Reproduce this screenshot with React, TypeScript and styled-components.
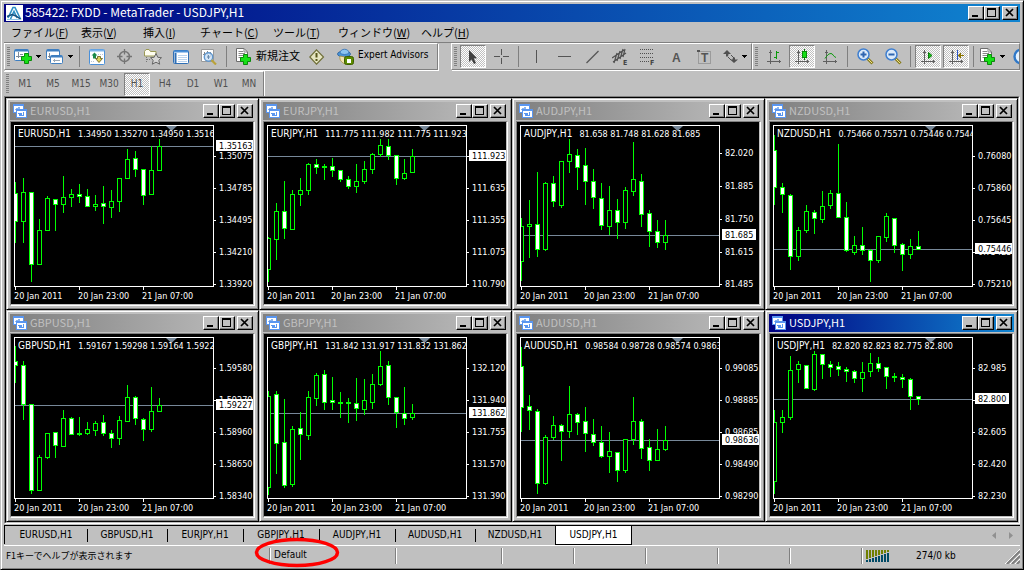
import React from "react";
import styled, { createGlobalStyle, css } from "styled-components";

const ui = '"DejaVu Sans Condensed", "DejaVu Sans", "Noto Sans CJK JP", sans-serif';
const jp = '"Noto Sans CJK JP", sans-serif';
const face = "#c0c0c0";

const GlobalStyle = createGlobalStyle`
  *, *::before, *::after { box-sizing: border-box; }
  body { margin: 0; background: ${face}; color: #000; font: 10px/12px ${ui}; }
  button { font: inherit; color: inherit; margin: 0; padding: 0; border: 0; background: none; }
  svg { display: block; flex: none; }
`;

const Frame = styled.div`
  display: flex;
  flex-direction: column;
  min-height: 100vh;
  padding: 3px;
  border: 1px solid;
  border-color: ${face} #000 #000 ${face};
  box-shadow: inset 1px 1px #fff, inset -1px -1px #808080;
  background: ${face};
  overflow: hidden;
`;

const TitleBar = styled.header<{ $active?: boolean }>`
  display: flex;
  align-items: center;
  height: 18px;
  padding: 0 2px;
  color: ${(p) => (p.$active ? "#fff" : face)};
  background: ${(p) =>
    p.$active
      ? "linear-gradient(90deg, #000080, #1084d0)"
      : "linear-gradient(90deg, #808080, #c0c0c0)"};
`;

const TitleText = styled.h1`
  flex: 1;
  min-width: 0;
  margin: 0 0 0 2px;
  padding-bottom: 2px;
  font: 400 12px/16px ${jp};
  white-space: nowrap;
  overflow: hidden;
`;

const WindowTitle = styled(TitleText)`
  margin-left: 3px;
  font-size: 11px;
`;

const CaptionButton = styled.button<{ $gap?: boolean }>`
  display: grid;
  place-items: center;
  width: 16px;
  height: 14px;
  margin-left: ${(p) => (p.$gap ? 2 : 0)}px;
  background: ${face};
  border: 1px solid;
  border-color: #fff #000 #000 #fff;
  box-shadow: inset -1px -1px #808080;
`;

const MenuBar = styled.nav`
  display: flex;
  height: 21px;
  padding-left: 7px;
  border-bottom: 1px solid #808080;
`;

const MenuItem = styled.button<{ $w: number }>`
  width: ${(p) => p.$w}px;
  font: 11px/20px ${jp};
  text-align: left;
  white-space: nowrap;
`;

const BandRow = styled.div`
  display: flex;
  height: 28px;
  overflow: hidden;
`;

const Band = styled.div<{ $gap?: boolean; $grow?: boolean }>`
  display: flex;
  flex: ${(p) => (p.$grow ? "1 0 0" : "none")};
  align-items: center;
  height: 27px;
  margin-right: ${(p) => (p.$gap ? 13 : 0)}px;
  border: 1px solid;
  border-color: #fff #808080 #808080 #fff;
  box-shadow: 1px 1px #fff;
  overflow: hidden;
`;

const PeriodBand = styled(Band)`
  align-self: flex-start;
  height: 25px;
  border-bottom: 0;
  border-left: 0;
  box-shadow: 1px 0 #fff;
`;

const Grip = styled.span`
  flex: none;
  width: 3px;
  height: 20px;
  margin: 0 2px 0 2px;
  background: repeating-linear-gradient(#808080 0 1px, ${face} 1px 2px);
`;

const ToolButton = styled.button<{ $w?: number; $on?: boolean; $left?: boolean }>`
  display: flex;
  flex: none;
  align-items: center;
  justify-content: ${(p) => (p.$left ? "flex-start" : "center")};
  gap: 4px;
  width: ${(p) => p.$w ?? 28}px;
  height: 23px;
  padding-left: ${(p) => (p.$left ? 6 : 0)}px;
  white-space: nowrap;
  ${(p) =>
    p.$on &&
    css`
      width: 26px;
      margin: 0 1px;
      border: 1px solid;
      border-color: #808080 #fff #fff #808080;
      background: conic-gradient(#fff 25%, ${face} 0 50%, #fff 0 75%, ${face} 0) 0 0 / 2px 2px;
    `}
`;

const PeriodButton = styled(ToolButton)`
  color: #505050;
`;

const Label = styled.span<{ $jp?: boolean }>`
  font: ${(p) => (p.$jp ? `11px/14px ${jp}` : `10px/14px ${ui}`)};
  padding-bottom: 3px;
`;

const Divider = styled.span`
  flex: none;
  width: 1px;
  height: 21px;
  margin: 0 3px;
  background: #808080;
`;

const Desktop = styled.main`
  border: 1px solid;
  border-color: #808080 #fff #fff #808080;
`;

const WindowGrid = styled.div`
  display: grid;
  grid-template-columns: repeat(4, minmax(0, 1fr));
  border: 1px solid;
  border-color: #000 ${face} ${face} #000;
`;

const ChartWindow = styled.section`
  border: 1px solid;
  border-color: ${face} #000 #000 ${face};
  box-shadow: inset 1px 1px #fff, inset -1px -1px #808080;
  padding: 3px;
  background: ${face};
`;

const ChartClient = styled.div`
  margin-top: 1px;
  border: 1px solid;
  border-color: #808080 #fff #fff #808080;
  background: ${face};
  padding: 0 1px 1px 0;
`;

const Canvas = styled.svg`
  width: 100%;
  height: 182px;
  background: #000;
  font: 9px ${ui};
  fill: #fff;
`;

const Plot = styled.svg`
  width: calc(100% - 42px);
`;

const Symbol = styled.tspan`
  font-size: 10px;
`;

const TabStrip = styled.nav`
  display: flex;
  height: 21px;
  margin-top: 1px;
  border-top: 1px solid #000;
  border-bottom: 1px solid #fff;
`;

const Tab = styled.button<{ $w: number; $active?: boolean }>`
  width: ${(p) => p.$w}px;
  height: ${(p) => (p.$active ? 19 : 18)}px;
  line-height: 18px;
  ${(p) =>
    p.$active
      ? css`
          background: #fff;
          border: 1px solid #000;
          border-width: 0 1px 1px;
        `
      : css`
          &:not(:first-child) {
            background: linear-gradient(#000, #000) 0 3px / 1px 13px no-repeat;
          }
          &:first-child {
            border-left: 1px solid #000;
          }
        `}
`;

const TabScroll = styled.div`
  display: flex;
  gap: 13px;
  align-items: center;
  margin-left: auto;
  padding-right: 7px;
`;

const StatusBar = styled.footer`
  display: flex;
  align-items: center;
  height: 20px;
  white-space: nowrap;
`;

const StatusCell = styled.div<{ $w?: number }>`
  position: relative;
  flex: none;
  width: ${(p) => p.$w ?? 72}px;
  height: 16px;
  padding-left: 4px;
  font: 10px/14px ${ui};
  border-left: 1px solid #808080;
  box-shadow: inset 1px 0 #fff;
`;

const StatusHint = styled.div`
  flex: none;
  width: 265px;
  padding-left: 2px;
  font: 9px/14px ${jp};
`;

const Connection = styled(StatusCell)`
  display: flex;
  flex: 1;
  gap: 27px;
  align-items: center;
`;

const Highlight = styled.svg`
  position: absolute;
  left: -17px;
  top: -12px;
  z-index: 2;
`;

const SizeGrip = styled.svg`
  margin-left: auto;
  align-self: flex-end;
`;

/* ---------- icons ---------- */

const Svg = ({ w = 16, h = 16, children, crisp }: { w?: number; h?: number; children: React.ReactNode; crisp?: boolean }) => (
  <svg width={w} height={h} viewBox={`0 0 ${w} ${h}`} fill="none" shapeRendering={crisp ? "crispEdges" : undefined} aria-hidden="true">
    {children}
  </svg>
);

const Logo = () => (
  <Svg w={17}>
    <rect width="17" height="16" fill="#fff" />
    <path d="M2 13 L7 2.500 L9 2.500 L14.500 14 M4.500 14 L8 6.500 L11 13" stroke="#2e8fc4" strokeWidth="1.600" />
    <path d="M1 11.500 L6 9.500 L10 11 L15 14.500" stroke="#174f7c" strokeWidth="1.500" />
    <path d="M1 14.500 H15" stroke="#8fc7e6" />
  </Svg>
);

const ChartIcon = () => (
  <Svg w={15} h={14} crisp>
    <path d="M1 0 H12 V9 H1 Z" fill="#5a96f0" />
    <path d="M2 2 H11 V8 H2 Z" fill="#fff" />
    <path d="M3 5 H4 V4 H5 V5 H6 V3 H7 V5 H10" stroke="#8ab4f0" />
    <path d="M4 5 H15 V14 H4 Z" fill="#5a96f0" />
    <path d="M5 7 H14 V13 H5 Z" fill="#fff" />
    <path d="M6 9.500 H7 V11.500 H8 V9.500 H9 V11.500 H11 V8.500 H12" stroke="#5a96f0" />
  </Svg>
);

const Plus = ({ x, y }: { x: number; y: number }) => (
  <path
    transform={`translate(${x} ${y})`}
    d="M3.500 .5 H7.500 V3.500 H10.500 V7.500 H7.500 V10.500 H3.500 V7.500 H.5 V3.500 H3.500 Z"
    fill="#16e016"
    stroke="#0a8a0a"
  />
);

const Caret = () => (
  <Svg w={5} h={3} crisp>
    <path d="M0 0 H5 L2.500 3 Z" fill="#000" />
  </Svg>
);

const NewChartIcon = () => (
  <Svg w={18} h={16}>
    <rect x=".5" y=".5" width="14" height="11" rx="1" fill="#fff" stroke="#3f7fc0" />
    <path d="M1 1.500 H14" stroke="#3f7fc0" strokeWidth="2" />
    <path d="M4.500 3 V9 M2 7.500 H9 M6 5.500 H9" stroke="#7d8a99" />
    <Plus x={7} y={4} />
  </Svg>
);

const ProfilesIcon = () => (
  <Svg w={18} h={16}>
    <rect x=".5" y=".5" width="13" height="10" rx="1" fill="#fff" stroke="#3f7fc0" />
    <path d="M1 1.500 H13" stroke="#3f7fc0" strokeWidth="2" />
    <path d="M3.500 4 V9 M2 7.500 H6" stroke="#7d8a99" />
    <rect x="4.500" y="6.500" width="12" height="8" rx="1" fill="#fff" stroke="#3f7fc0" />
    <path d="M5 7.500 H16" stroke="#3f7fc0" strokeWidth="2" />
    <path d="M7 11.500 H14 M8.500 10 V13" stroke="#9aa7b5" />
  </Svg>
);

const MarketWatchIcon = () => (
  <Svg>
    <rect x=".5" y=".5" width="15" height="15" rx="1" fill="#fff" stroke="#4a90d9" />
    <path d="M1 1.500 H15" stroke="#7db4ea" strokeWidth="2" />
    <path d="M9 5.500 H14 M2 12.500 H6" stroke="#b7c3d0" strokeDasharray="1 1" />
    <path d="M5.500 3.500 L8.500 6.500 H7 V9.500 H4 V6.500 H2.500 Z" fill="#1c8a4a" />
    <path d="M8.500 7.500 H11.500 V9.500 H13.500 L10 13.500 L6.500 9.500 H8.500 Z" fill="#e0d060" stroke="#5e5a10" strokeWidth=".8" />
  </Svg>
);

const NavigatorIcon = () => (
  <Svg>
    <circle cx="7.500" cy="7.500" r="5" stroke="#747474" strokeWidth="1.600" />
    <path d="M7.500 0 V5.500 M7.500 9.500 V15 M0 7.500 H5.500 M9.500 7.500 H15" stroke="#747474" strokeWidth="1.300" />
  </Svg>
);

const FavoritesIcon = () => (
  <Svg w={18}>
    <path d="M.5 2.500 L2 .5 H5 L6.500 2.500 H12 V7 H.5 Z" fill="#fffef2" stroke="#9b9a55" />
    <path d="M2.500 8 V14 M3 10.500 H6" stroke="#777" strokeDasharray="1 1" />
    <path d="M12 4.500 L13.800 8.300 L17.500 8.700 L14.800 11.300 L15.700 15.200 L12 13.200 L8.300 15.200 L9.200 11.300 L6.500 8.700 L10.200 8.300 Z" fill="#d6d6d6" stroke="#666" />
  </Svg>
);

const DataWindowIcon = () => (
  <Svg>
    <rect x=".5" y="1.500" width="15" height="13" rx="1" fill="#fff" stroke="#2f6fb5" />
    <path d="M1 2.500 H15" stroke="#4a90d9" strokeWidth="2" />
    <path d="M2.500 4 V14" stroke="#2f6fb5" strokeWidth="2" />
    <path d="M5 6.500 H14 M5 8.500 H14 M5 10.500 H14 M5 12.500 H14" stroke="#b9d3ee" />
  </Svg>
);

const TesterIcon = () => (
  <Svg w={18}>
    <path d="M1.500 .5 H13.500 V12.500 H1.500 Z" fill="#fff" stroke="#9a9a9a" />
    <path d="M4.500 3 V10 M7.500 2 V9 M10.500 3 V8 M3 5.500 H5" stroke="#888" />
    <circle cx="8.500" cy="8" r="4.200" fill="#cfe3f7" fillOpacity=".85" stroke="#6096cc" strokeWidth="1.400" />
    <path d="M11.500 11 L16 15.500" stroke="#b9a23a" strokeWidth="2.200" />
    <path d="M8.500 6 V10 M7 8 H10" stroke="#6a8caf" />
  </Svg>
);

const NewOrderIcon = () => (
  <Svg h={17}>
    <path d="M.5 .5 H8 L11.500 4 V13.500 H.5 Z" fill="#fff" stroke="#6d6d6d" />
    <path d="M2.500 3.500 H7 M2.500 5.500 H9 M2.500 7.500 H9 M2.500 9.500 H5 M8 .5 V4 H11" stroke="#888" />
    <Plus x={4} y={6} />
  </Svg>
);

const MetaEditorIcon = () => (
  <Svg>
    <path d="M7.500 .8 L14.500 8 L7.500 15.200 L.8 8 Z" fill="#e6e5c0" stroke="#6f6f3a" strokeWidth="1.200" />
    <path d="M7.500 4 V8.500" stroke="#55551a" strokeWidth="2" />
    <path d="M7.500 10 V12" stroke="#55551a" strokeWidth="2" />
  </Svg>
);

const ExpertIcon = () => (
  <Svg w={17} h={18}>
    <ellipse cx="7" cy="6" rx="6.500" ry="3" fill="#4a93d6" stroke="#27609b" strokeWidth=".8" />
    <path d="M3 5 C3 0 12 0 12 5 C10 7 5 7 3 5 Z" fill="#8cc4f0" stroke="#2f6fb5" strokeWidth=".8" />
    <path d="M3 8 C2 13 6 15 8 16 V9 Z" fill="#f0e3b4" stroke="#a58f3a" strokeWidth=".8" />
    <rect x="7.500" y="8.500" width="9" height="8" rx="2" fill="#5d8c00" stroke="#3d5e00" />
    <rect x="10" y="11" width="4" height="4" fill="#fff" />
  </Svg>
);

const CursorIcon = () => (
  <Svg w={16}>
    <path d="M4 1 V13 L6.600 10.600 L9 15 L11 14 L8.800 9.500 L12 9.200 Z" fill="#404040" />
  </Svg>
);

const CrosshairIcon = () => (
  <Svg w={15} h={15} crisp>
    <path d="M7.500 0 V6 M7.500 9 V15 M0 7.500 H6 M9 7.500 H15" stroke="#555" />
  </Svg>
);

const VLineIcon = () => (
  <Svg w={13} h={13} crisp>
    <path d="M6.500 0 V13" stroke="#555" />
  </Svg>
);

const HLineIcon = () => (
  <Svg w={13} h={13} crisp>
    <path d="M0 6.500 H13" stroke="#555" />
  </Svg>
);

const TrendIcon = () => (
  <Svg w={13} h={14}>
    <path d="M.5 13 L12.500 1" stroke="#555" strokeWidth="1.200" />
  </Svg>
);

const IconLetter = styled.text`
  font: 700 7px ${ui};
  fill: #444;
`;

const ToolLetter = styled.text`
  font: 700 12px "Liberation Sans", sans-serif;
  fill: #555;
`;

const ChannelIcon = () => (
  <Svg w={17} h={18}>
    <path d="M0 10 L12 2 M1 14 L14 5 M2 15 L5 5 M5 13 L8 3 M8 11 L11 1 M11 9 L13 1" stroke="#505050" strokeWidth="1.200" />
    <IconLetter x="11" y="17">E</IconLetter>
  </Svg>
);

const FiboIcon = () => (
  <Svg w={16} h={18}>
    <path d="M0 1.500 H14 M0 5.500 H14 M0 9.500 H14 M0 13.500 H9" stroke="#505050" strokeDasharray="1 1" />
    <IconLetter x="10" y="17">F</IconLetter>
  </Svg>
);

const LetterA = () => (
  <Svg w={10} h={14}>
    <ToolLetter x="1" y="12">A</ToolLetter>
  </Svg>
);

const LabelIcon = () => (
  <Svg w={14} h={14}>
    <rect x="1.500" y="1.500" width="12" height="12" stroke="#777" strokeDasharray="1 1" />
    <rect width="3" height="2" fill="#555" />
    <ToolLetter x="4" y="12">T</ToolLetter>
  </Svg>
);

const ArrowsIcon = () => (
  <Svg w={15} h={14}>
    <path d="M4 0 L8 4 L5.500 4 L5 6.500 L3 6.500 L3 4 L0 4 Z M11 13 L7 9.500 L9.500 9.500 L10 7.500 H12 V9.500 H15 Z" fill="#505050" />
    <path d="M5 7 L8 10 M8 5 L11 8" stroke="#505050" />
  </Svg>
);

const Axes = ({ children }: { children: React.ReactNode }) => (
  <Svg w={15} h={15} crisp>
    <path d="M3.500 1 V15 M0 12.500 H14 M2 3.500 H5 M12.500 11 V14" stroke="#606060" />
    {children}
  </Svg>
);

const ZoomIcon = ({ plus }: { plus?: boolean }) => (
  <Svg w={17} h={17}>
    <path d="M10 10 L15.500 15.500" stroke="#8a7d1e" strokeWidth="3" />
    <path d="M10.500 10.500 L15 15" stroke="#f0e48a" />
    <circle cx="6.500" cy="6.500" r="5.500" fill="#dcebfa" stroke="#3f7fd0" strokeWidth="1.500" />
    <path d={plus ? "M3.500 6.500 H9.500 M6.500 3.500 V9.500" : "M3.500 6.500 H9.500"} stroke="#2f66b0" strokeWidth="2" />
  </Svg>
);

const ClockIcon = () => (
  <Svg w={17} h={17}>
    <circle cx="8.500" cy="8.500" r="7" fill="#e6f2fd" stroke="#2f78c8" strokeWidth="2.400" />
    <path d="M8.500 4.500 V8.500 H11" stroke="#444" />
  </Svg>
);

const TrafficIcon = () => (
  <Svg w={23} h={12} crisp>
    {[0, 1, 2, 3, 4, 5, 6, 7].map((i) => (
      <React.Fragment key={i}>
        <rect x={i * 3} y="0" width="2" height={9 - i} fill="#6f7f00" />
        <rect x={i * 3} y={10 - i} width="2" height={2 + i} fill="#004a66" />
      </React.Fragment>
    ))}
  </Svg>
);

const CaptionButtons = () => (
  <>
    <CaptionButton aria-label="Minimize">
      <Svg w={12} h={10} crisp>
        <path d="M2 7 H8 V9 H2 Z" fill="#000" />
      </Svg>
    </CaptionButton>
    <CaptionButton aria-label="Maximize">
      <Svg w={12} h={10} crisp>
        <path d="M1 0 H10 V9 H1 Z M2 2 V8 H9 V2 Z" fill="#000" fillRule="evenodd" />
      </Svg>
    </CaptionButton>
    <CaptionButton $gap aria-label="Close">
      <Svg w={12} h={10}>
        <path d="M2 1 L9 8 M9 1 L2 8" stroke="#000" strokeWidth="1.700" />
      </Svg>
    </CaptionButton>
  </>
);

/* ---------- charts ---------- */

// high, body top, body bottom, low (canvas rows), 1 = bearish body
type Candle = [number, number, number, number, 0 | 1];

interface ChartData {
  symbol: string;
  quote: string;
  bid: string;
  bidY: number;
  labels: string[];
  ticks?: number[];
  candles: Candle[];
}

const charts: ChartData[] = [
  {
    symbol: "EURUSD,H1",
    quote: "1.34950 1.35270 1.34950 1.35163",
    bid: "1.35163",
    bidY: 24,
    labels: ["1.35075", "1.34785", "1.34495", "1.34210", "1.33920"],
    candles: [
      [60, 71, 99, 120, 1], [56, 70, 99, 120, 0], [70, 70, 142, 159, 1], [97, 108, 142, 142, 0], [74, 76, 108, 108, 0],
      [77, 77, 82, 108, 1], [54, 75, 82, 90, 0], [67, 72, 75, 84, 0], [62, 72, 74, 80, 1], [67, 74, 84, 84, 1],
      [73, 82, 84, 88, 0], [64, 81, 84, 101, 1], [68, 79, 85, 95, 0], [56, 56, 79, 89, 0], [27, 37, 56, 56, 0],
      [29, 36, 47, 54, 1], [47, 47, 73, 82, 1], [24, 48, 72, 72, 0], [17, 24, 48, 48, 0],
    ],
  },
  {
    symbol: "EURJPY,H1",
    quote: "111.775 111.982 111.775 111.923",
    bid: "111.923",
    bidY: 34,
    labels: ["", "111.635", "111.355", "111.075", "110.790"],
    candles: [
      [115, 116, 147, 159, 0], [81, 89, 117, 137, 0], [59, 89, 106, 116, 1], [68, 72, 107, 107, 0], [56, 68, 72, 83, 0],
      [41, 42, 68, 72, 0], [37, 42, 45, 51, 1], [42, 44, 45, 57, 1], [36, 44, 48, 54, 1], [48, 48, 57, 59, 1],
      [54, 57, 64, 66, 1], [42, 59, 64, 70, 0], [39, 47, 59, 61, 0], [31, 32, 47, 51, 0], [17, 23, 32, 34, 0],
      [17, 24, 33, 37, 1], [33, 33, 56, 62, 1], [37, 51, 56, 57, 0], [27, 34, 50, 50, 0],
    ],
  },
  {
    symbol: "AUDJPY,H1",
    quote: "81.658 81.748 81.628 81.685",
    bid: "81.685",
    bidY: 113,
    labels: ["82.020", "81.885", "81.750", "81.615", "81.485"],
    ticks: [31, 64, 97, 130, 162],
    candles: [
      [96, 104, 139, 158, 0], [78, 102, 104, 135, 0], [50, 102, 127, 134, 1], [60, 61, 127, 128, 0], [54, 61, 79, 84, 1],
      [39, 39, 83, 85, 0], [17, 32, 39, 50, 0], [27, 33, 45, 67, 1], [26, 43, 59, 82, 1], [47, 59, 75, 86, 1],
      [61, 76, 103, 107, 1], [64, 88, 104, 112, 0], [77, 88, 100, 116, 1], [65, 68, 100, 106, 0], [20, 57, 69, 73, 0],
      [52, 59, 92, 104, 1], [88, 91, 109, 124, 1], [98, 109, 120, 125, 1], [98, 113, 120, 127, 0],
    ],
  },
  {
    symbol: "NZDUSD,H1",
    quote: "0.75466 0.75571 0.75446 0.75446",
    bid: "0.75446",
    bidY: 127,
    labels: ["0.76080", "0.75860", "0.75645", "0.75425", "0.75210"],
    candles: [
      [13, 28, 65, 82, 1], [61, 65, 72, 90, 1], [72, 73, 134, 147, 1], [105, 108, 134, 138, 0], [83, 89, 108, 110, 0],
      [88, 90, 96, 111, 1], [69, 84, 97, 100, 0], [68, 71, 83, 86, 0], [22, 71, 95, 95, 1], [80, 95, 128, 129, 1],
      [114, 123, 130, 132, 0], [105, 123, 128, 132, 1], [127, 128, 138, 159, 1], [114, 114, 138, 140, 0], [91, 94, 115, 119, 0],
      [96, 96, 123, 130, 1], [121, 122, 132, 148, 1], [117, 124, 132, 136, 0], [109, 124, 127, 127, 1],
    ],
  },
  {
    symbol: "GBPUSD,H1",
    quote: "1.59167 1.59298 1.59164 1.59227",
    bid: "1.59227",
    bidY: 71,
    labels: ["1.59580", "1.59270", "1.58960", "1.58650", "1.58340"],
    candles: [
      [12, 27, 31, 48, 1], [27, 31, 70, 85, 1], [70, 70, 156, 159, 1], [121, 123, 156, 156, 0], [99, 99, 123, 124, 0],
      [98, 98, 111, 123, 1], [76, 84, 112, 112, 0], [83, 84, 100, 100, 1], [83, 99, 100, 101, 1], [88, 95, 99, 100, 0],
      [87, 89, 96, 101, 0], [81, 88, 99, 101, 1], [96, 99, 104, 113, 1], [82, 86, 104, 110, 0], [51, 63, 87, 87, 0],
      [62, 63, 84, 90, 1], [84, 85, 95, 106, 1], [53, 77, 95, 97, 0], [64, 71, 77, 77, 0],
    ],
  },
  {
    symbol: "GBPJPY,H1",
    quote: "131.842 131.917 131.832 131.862",
    bid: "131.862",
    bidY: 79,
    labels: ["132.120", "131.940", "131.755", "131.570", "131.390"],
    candles: [
      [57, 62, 153, 160, 0], [57, 60, 109, 139, 1], [65, 108, 151, 153, 1], [92, 95, 150, 152, 0], [78, 94, 100, 125, 1],
      [57, 63, 101, 105, 0], [39, 41, 64, 71, 0], [36, 40, 68, 75, 1], [43, 66, 68, 75, 1], [58, 68, 69, 83, 1],
      [64, 68, 69, 88, 1], [44, 69, 74, 86, 1], [45, 66, 75, 80, 0], [40, 50, 68, 74, 0], [17, 32, 50, 51, 0],
      [27, 31, 63, 70, 1], [63, 63, 78, 93, 1], [53, 79, 84, 90, 1], [70, 79, 83, 85, 0],
    ],
  },
  {
    symbol: "AUDUSD,H1",
    quote: "0.98584 0.98728 0.98574 0.98636",
    bid: "0.98636",
    bidY: 106,
    labels: ["0.99085", "0.98885", "0.98685", "0.98490", "0.98290"],
    candles: [
      [13, 32, 73, 97, 1], [61, 72, 76, 95, 1], [75, 77, 149, 159, 1], [101, 103, 149, 150, 0], [82, 91, 103, 105, 0],
      [90, 91, 97, 126, 1], [52, 80, 97, 103, 0], [79, 80, 88, 100, 1], [73, 87, 99, 117, 1], [85, 100, 108, 111, 1],
      [92, 108, 122, 123, 1], [98, 117, 122, 138, 0], [118, 118, 136, 147, 1], [105, 105, 136, 138, 0], [63, 87, 105, 110, 0],
      [85, 87, 114, 124, 1], [105, 113, 126, 136, 1], [95, 115, 126, 126, 0], [92, 106, 115, 116, 0],
    ],
  },
  {
    symbol: "USDJPY,H1",
    quote: "82.820 82.823 82.775 82.800",
    bid: "82.800",
    bidY: 65,
    labels: ["82.985", "", "82.605", "82.420", "82.230"],
    candles: [
      [76, 88, 147, 159, 0], [76, 83, 88, 98, 0], [22, 36, 83, 85, 0], [27, 30, 35, 48, 0], [31, 31, 54, 54, 1],
      [17, 20, 55, 56, 0], [20, 20, 30, 44, 1], [27, 30, 33, 42, 1], [28, 32, 35, 41, 1], [33, 35, 37, 47, 1],
      [36, 37, 44, 48, 1], [28, 38, 44, 57, 0], [19, 29, 37, 42, 0], [23, 29, 34, 37, 1], [33, 33, 42, 54, 1],
      [39, 42, 43, 47, 1], [40, 43, 45, 53, 1], [44, 45, 62, 75, 1], [62, 62, 65, 70, 1],
    ],
  },
];

const defaultTicks = [34, 66, 98, 130, 162];
const times = ["20 Jan 2011", "20 Jan 23:00", "21 Jan 07:00"];

const CandleBar = ({ x, data: [high, top, bottom, low, bear] }: { x: number; data: Candle }) => (
  <g shapeRendering="crispEdges">
    <rect x={x} y={high} width="1" height={low - high + 1} fill="#0f0" />
    <rect x={x - 2} y={top} width="5" height={bottom - top + 1} fill="#0f0" />
    {bottom - top > 1 && (
      <rect x={x - 1} y={top + 1} width="3" height={bottom - top - 1} fill={bear ? "#fff" : "#000"} />
    )}
  </g>
);

const Chart = ({ data }: { data: ChartData }) => (
  <Canvas role="img" aria-label={data.symbol}>
    <Plot x="3" y="3" height="162">
      <g transform="translate(-3 -3)">
        <rect x="3" y={data.bidY} width="100%" height="1" fill="#778899" />
        {data.candles.map((c, i) => (
          <CandleBar key={i} x={4 + i * 8} data={c} />
        ))}
        <path d="M155 4 H166 L160.500 9 Z" fill="#778899" />
        <text x="7" y="15">
          <Symbol>{data.symbol}</Symbol>
          <tspan dx="7">{data.quote}</tspan>
        </text>
      </g>
      <rect width="100%" height="100%" fill="none" stroke="#fff" strokeWidth="2" shapeRendering="crispEdges" />
    </Plot>
    {times.map((t, i) => (
      <React.Fragment key={t}>
        <rect x={4 + i * 64} y="165" width="1" height="3" />
        <text x={3 + i * 64} y="177">{t}</text>
      </React.Fragment>
    ))}
    <svg x="100%" overflow="visible">
      {(data.ticks ?? defaultTicks).map((y, i) => (
        <React.Fragment key={y}>
          <rect x="-39" y={y} width="2" height="1" />
          <text x="-34" y={y + 3}>{data.labels[i]}</text>
        </React.Fragment>
      ))}
      <rect x="-37" y={data.bidY - 6} width={data.bid.length > 6 ? 37 : 34} height="11" />
      <text x="-34" y={data.bidY + 3} fill="#000">{data.bid}</text>
    </svg>
  </Canvas>
);

const menus: [string, string, number][] = [
  ["ファイル", "F", 70], ["表示", "V", 62], ["挿入", "I", 57], ["チャート", "C", 73],
  ["ツール", "T", 65], ["ウィンドウ", "W", 83], ["ヘルプ", "H", 70],
];

const periods = ["M1", "M5", "M15", "M30", "H1", "H4", "D1", "W1", "MN"];

const tabs: [string, number][] = [
  ["EURUSD,H1", 83], ["GBPUSD,H1", 80], ["EURJPY,H1", 76], ["GBPJPY,H1", 76],
  ["AUDJPY,H1", 76], ["AUDUSD,H1", 80], ["NZDUSD,H1", 80], ["USDJPY,H1", 77],
];

export default function App() {
  return (
    <>
      <GlobalStyle />
      <Frame>
        <TitleBar $active>
          <Logo />
          <TitleText>585422: FXDD - MetaTrader - USDJPY,H1</TitleText>
          <CaptionButtons />
        </TitleBar>

        <MenuBar>
          {menus.map(([name, key, w]) => (
            <MenuItem key={key} $w={w}>
              {name}(<u>{key}</u>)
            </MenuItem>
          ))}
        </MenuBar>

        <BandRow>
          <Band $gap>
            <Grip />
            <ToolButton $w={31} aria-label="New chart"><NewChartIcon /><Caret /></ToolButton>
            <ToolButton $w={33} aria-label="Profiles"><ProfilesIcon /><Caret /></ToolButton>
            <Divider />
            <ToolButton aria-label="Market watch"><MarketWatchIcon /></ToolButton>
            <ToolButton aria-label="Data window"><NavigatorIcon /></ToolButton>
            <ToolButton aria-label="Navigator"><FavoritesIcon /></ToolButton>
            <ToolButton aria-label="Terminal"><DataWindowIcon /></ToolButton>
            <ToolButton aria-label="Strategy tester"><TesterIcon /></ToolButton>
            <Divider />
            <ToolButton $w={73} $left><NewOrderIcon /><Label $jp>新規注文</Label></ToolButton>
            <ToolButton aria-label="MetaEditor"><MetaEditorIcon /></ToolButton>
            <ToolButton $w={106} $left><ExpertIcon /><Label>Expert Advisors</Label></ToolButton>
          </Band>
          <Band>
            <Grip />
            <ToolButton $on aria-label="Cursor"><CursorIcon /></ToolButton>
            <ToolButton aria-label="Crosshair"><CrosshairIcon /></ToolButton>
            <Divider />
            <ToolButton aria-label="Vertical line"><VLineIcon /></ToolButton>
            <ToolButton aria-label="Horizontal line"><HLineIcon /></ToolButton>
            <ToolButton aria-label="Trendline"><TrendIcon /></ToolButton>
            <ToolButton aria-label="Equidistant channel"><ChannelIcon /></ToolButton>
            <ToolButton aria-label="Fibonacci retracement"><FiboIcon /></ToolButton>
            <ToolButton aria-label="Text"><LetterA /></ToolButton>
            <ToolButton aria-label="Text label"><LabelIcon /></ToolButton>
            <ToolButton $w={33} aria-label="Arrows"><ArrowsIcon /><Caret /></ToolButton>
          </Band>
          <Band $grow>
            <Grip />
            <ToolButton aria-label="Bar chart">
              <Axes><path d="M9.500 2 V10 M10 3.500 H12 M7 8.500 H9" stroke="#0a9a0a" /></Axes>
            </ToolButton>
            <ToolButton $on aria-label="Candlesticks">
              <Axes><path d="M9.500 0 V11" stroke="#0a7a0a" /><rect x="7.500" y="2.500" width="4" height="6" fill="#16e016" stroke="#0a8a0a" /></Axes>
            </ToolButton>
            <ToolButton aria-label="Line chart">
              <Axes><path d="M2 9.500 C4 7 5 4.500 8 4.500 C10 4.500 10 7.500 13 8.500" stroke="#0a9a0a" shapeRendering="auto" /></Axes>
            </ToolButton>
            <Divider />
            <ToolButton aria-label="Zoom in"><ZoomIcon plus /></ToolButton>
            <ToolButton aria-label="Zoom out"><ZoomIcon /></ToolButton>
            <Divider />
            <ToolButton $on aria-label="Auto scroll">
              <Axes><path d="M7.500 3.500 L11 6.500 L7.500 9.500 Z" fill="#16c016" stroke="#0a7a0a" shapeRendering="auto" /></Axes>
            </ToolButton>
            <ToolButton $on aria-label="Chart shift">
              <Axes>
                <path d="M8.500 1 V11" stroke="#2a55c8" />
                <path d="M9 6.500 L12 4 V9 Z" fill="#8a7400" />
                <path d="M12 6.500 H15" stroke="#8a7400" />
              </Axes>
            </ToolButton>
            <Divider />
            <ToolButton $w={30} aria-label="Indicators"><NewOrderIcon /><Caret /></ToolButton>
            <ToolButton aria-label="Periodicity" $left><ClockIcon /></ToolButton>
          </Band>
        </BandRow>

        <PeriodBand>
          <Grip />
          {periods.map((p) => (
            <PeriodButton key={p} $on={p === "H1"}>{p}</PeriodButton>
          ))}
        </PeriodBand>

        <Desktop>
          <WindowGrid>
            {charts.map((c) => (
              <ChartWindow key={c.symbol}>
                <TitleBar $active={c.symbol === "USDJPY,H1"}>
                  <ChartIcon />
                  <WindowTitle as="h2">{c.symbol}</WindowTitle>
                  <CaptionButtons />
                </TitleBar>
                <ChartClient>
                  <Chart data={c} />
                </ChartClient>
              </ChartWindow>
            ))}
          </WindowGrid>
        </Desktop>

        <TabStrip>
          {tabs.map(([name, w]) => (
            <Tab key={name} $w={w} $active={name === "USDJPY,H1"}>{name}</Tab>
          ))}
          <TabScroll>
            <Svg w={4} h={7}><path d="M4 0 V7 L0 3.500 Z" fill="#909090" /></Svg>
            <Svg w={4} h={7}><path d="M0 0 V7 L4 3.500 Z" fill="#909090" /></Svg>
          </TabScroll>
        </TabStrip>

        <StatusBar>
          <StatusHint>F1キーでヘルプが表示されます</StatusHint>
          <StatusCell $w={126}>
            Default
            <Highlight width="88" height="33" viewBox="0 0 88 33" fill="none" aria-hidden="true">
              <ellipse cx="44" cy="16.500" rx="40.500" ry="13" stroke="#f00" strokeWidth="3.500" />
            </Highlight>
          </StatusCell>
          <StatusCell $w={106} />
          <StatusCell />
          <StatusCell />
          <StatusCell />
          <StatusCell />
          <StatusCell />
          <Connection>
            <TrafficIcon />
            274/0 kb
            <SizeGrip width="15" height="15" viewBox="0 0 15 15" aria-hidden="true">
              <path d="M0 15 L15 0 M5 15 L15 5 M10 15 L15 10" stroke="#fff" />
              <path d="M2 15 L15 2 M7 15 L15 7 M12 15 L15 12" stroke="#808080" strokeWidth="2" />
            </SizeGrip>
          </Connection>
        </StatusBar>
      </Frame>
    </>
  );
}
